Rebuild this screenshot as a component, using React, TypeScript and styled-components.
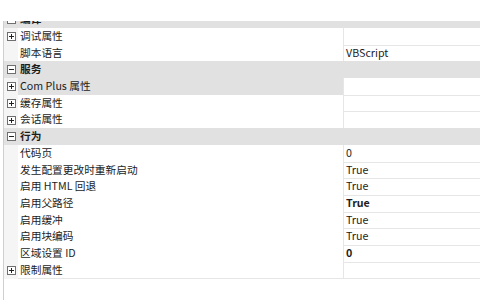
import React from "react";
import styled, { createGlobalStyle } from "styled-components";

const GlobalStyle = createGlobalStyle`
  body {
    margin: 0;
    background: #fff;
    font-family: "Segoe UI", "Noto Sans CJK SC", "Open Sans", sans-serif;
  }
`;

type Item =
  | { kind: "cat"; label: string }
  | {
      kind: "prop";
      label: string;
      value?: string;
      bold?: boolean;
      expand?: boolean;
      selected?: boolean;
    };

const items: Item[] = [
  { kind: "cat", label: "编译" },
  { kind: "prop", label: "调试属性", expand: true },
  { kind: "prop", label: "脚本语言", value: "VBScript" },
  { kind: "cat", label: "服务" },
  { kind: "prop", label: "Com Plus 属性", expand: true, selected: true },
  { kind: "prop", label: "缓存属性", expand: true },
  { kind: "prop", label: "会话属性", expand: true },
  { kind: "cat", label: "行为" },
  { kind: "prop", label: "代码页", value: "0" },
  { kind: "prop", label: "发生配置更改时重新启动", value: "True" },
  { kind: "prop", label: "启用 HTML 回退", value: "True" },
  { kind: "prop", label: "启用父路径", value: "True", bold: true },
  { kind: "prop", label: "启用缓冲", value: "True" },
  { kind: "prop", label: "启用块编码", value: "True" },
  { kind: "prop", label: "区域设置 ID", value: "0", bold: true },
  { kind: "prop", label: "限制属性", expand: true },
];

const Toggle = ({ open }: { open: boolean }) => (
  <svg width="9" height="9" viewBox="0 0 9 9">
    <rect x="0.5" y="0.5" width="8" height="8" fill="#fff" stroke="#6f6f6f" />
    <line x1="2" y1="4.5" x2="7" y2="4.5" stroke="#222" />
    {!open && <line x1="4.5" y1="2" x2="4.5" y2="7" stroke="#222" />}
  </svg>
);

const App = () => (
  <>
    <GlobalStyle />
    <Panel>
      <Grid>
        <List>
          {items.map((it, i) =>
            it.kind === "cat" ? (
              <CatRow key={i}>
                <Margin $cat>
                  <Toggle open />
                </Margin>
                <CatLabel>{it.label}</CatLabel>
              </CatRow>
            ) : (
              <PropRow key={i}>
                <Margin>{it.expand && <Toggle open={false} />}</Margin>
                <NameCell $selected={it.selected}>{it.label}</NameCell>
                <ValueCell $bold={it.bold}>{it.value}</ValueCell>
              </PropRow>
            )
          )}
        </List>
      </Grid>
    </Panel>
  </>
);

export default App;

const ROW = "16.7px";

const Panel = styled.div`
  width: 504px;
  height: 300px;
  padding-top: 21px;
  box-sizing: border-box;
  overflow: hidden;
  background: #fff;
`;

const Grid = styled.div`
  margin-left: 3px;
  width: 477px;
  height: 100%;
  border-left: 1px solid #cfcfcf;
  box-sizing: border-box;
  overflow: hidden;
`;

const List = styled.div`
  display: flex;
  flex-direction: column;
  margin-top: -9.7px;
  font-size: 10.7px;
  color: #1c1c1c;
`;

const CatRow = styled.div`
  display: grid;
  grid-template-columns: 14px 1fr;
  height: ${ROW};
  background: #e1e1e1;
  align-items: center;
`;

const PropRow = styled.div`
  display: grid;
  grid-template-columns: 14px 325px 1fr;
  height: ${ROW};
`;

const Margin = styled.div<{ $cat?: boolean }>`
  display: flex;
  align-items: center;
  padding-left: 3px;
  background: ${(p) => (p.$cat ? "#e1e1e1" : "#f5f5f5")};
`;

const CatLabel = styled.div`
  padding-left: 2px;
  font-weight: 700;
  line-height: ${ROW};
`;

const NameCell = styled.div<{ $selected?: boolean }>`
  padding-left: 2px;
  line-height: ${ROW};
  border-bottom: 1px solid #e6e6e6;
  box-sizing: border-box;
  background: ${(p) => (p.$selected ? "#e1e1e1" : "#fff")};
  white-space: nowrap;
`;

const ValueCell = styled.div<{ $bold?: boolean }>`
  padding-left: 2px;
  line-height: ${ROW};
  border-left: 1px solid #e6e6e6;
  border-bottom: 1px solid #e6e6e6;
  box-sizing: border-box;
  font-weight: ${(p) => (p.$bold ? 700 : 400)};
  white-space: nowrap;
`;
